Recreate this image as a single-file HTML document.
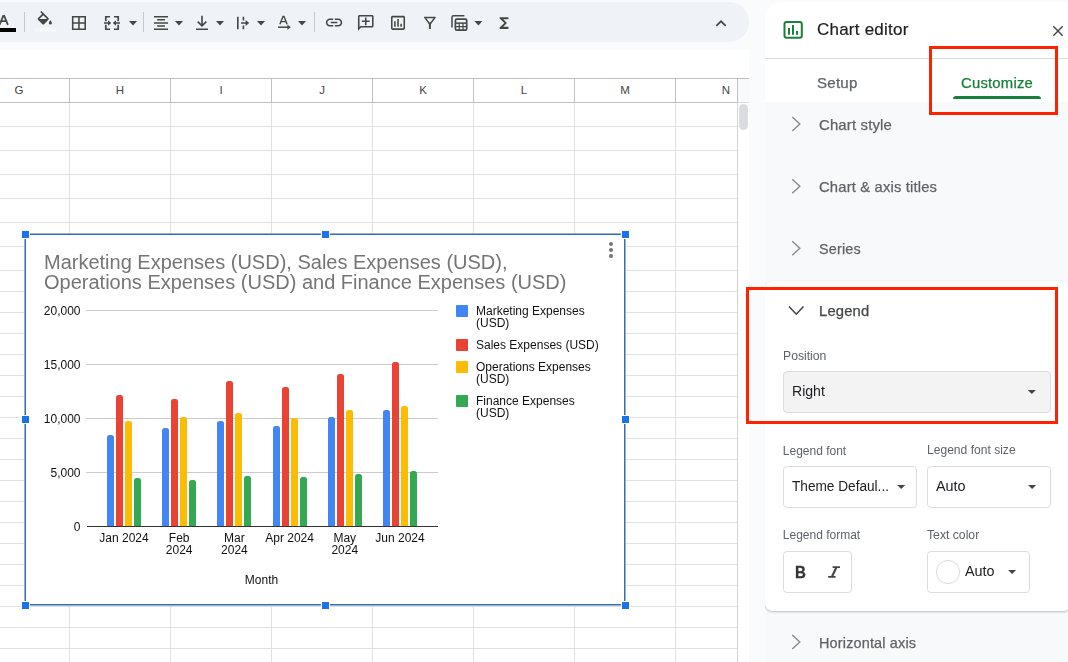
<!DOCTYPE html>
<html>
<head>
<meta charset="utf-8">
<title>Sheets</title>
<style>
*{box-sizing:border-box;margin:0;padding:0}
html,body{width:1068px;height:662px;overflow:hidden;background:#f9fbfd;font-family:"Liberation Sans",sans-serif;}
.a{position:absolute}
.colh{position:absolute;top:79px;height:23px;font-size:11.5px;color:#444746;text-align:center;line-height:23px}
.vl{position:absolute;width:1px;background:#e1e1e1}
.hl{position:absolute;height:1px;background:#e1e1e1;left:0;width:737px}
.tsep{position:absolute;top:12px;width:1px;height:20px;background:#c7c7c7}
.ico{position:absolute;fill:#444746;overflow:visible}
.ics{position:absolute;overflow:visible}
.dd{position:absolute;width:0;height:0;border-left:4px solid transparent;border-right:4px solid transparent;border-top:4px solid #444746}
.hd{position:absolute;width:9px;height:9px;background:#1a73e8;border:1px solid #fff}
.ct{position:absolute;font-size:12px;color:#111;white-space:nowrap;line-height:12px}
.bar{position:absolute;width:7px;border-radius:2.5px 2.5px 0 0}
.gl{position:absolute;left:86px;width:352px;height:1px;background:#ccc}
.sec{position:absolute;left:819px;font-size:15px;color:#444746;white-space:nowrap;line-height:20px}
.lbl{position:absolute;font-size:12px;color:#5f6368;white-space:nowrap;line-height:14px}
.box{position:absolute;border:1px solid #dadce0;border-radius:4px;background:#fff}
.val{position:absolute;font-size:14px;color:#202124;white-space:nowrap;line-height:16px}
.redbox{position:absolute;border:3px solid #ff2200}
.chev{position:absolute;overflow:visible;fill:none;stroke:#747775;stroke-width:1.6}
</style>
</head>
<body>
<div class="a" style="left:-30px;top:2px;width:779px;height:40px;background:#eff3f8;border-radius:20px"></div>
<svg class="ics" style="left:-4px;top:12px" width="24" height="22" viewBox="-4 12 24 22" fill="none" stroke="#444746" stroke-width="1.75"><path d="M-0.5 24.9L3.2 15.9H4.2L7.9 24.9M0.9 21H6.5"/></svg>
<div class="a" style="left:0;top:28px;width:16px;height:4px;background:#000"></div>
<div class="tsep" style="left:24px"></div>
<svg class="ico" style="left:35px;top:11px" width="22" height="22"><g transform="translate(0.30,0.00) scale(0.794)"><path d="M16.56 8.94L7.62 0 6.21 1.41l2.38 2.38-5.15 5.15c-.59.59-.59 1.54 0 2.12l5.5 5.5c.29.29.68.44 1.06.44s.77-.15 1.06-.44l5.5-5.5c.59-.58.59-1.53 0-2.12zM5.21 10L10 5.21 14.79 10H5.21zM19 11.5s-2 2.17-2 3.5c0 1.1.9 2 2 2s2-.9 2-2c0-1.33-2-3.5-2-3.5z"/></g></svg>
<div class="a" style="left:35px;top:28px;width:21px;height:4px;background:rgba(255,255,255,.35)"></div>
<svg class="ico" style="left:69px;top:13px" width="21" height="21"><g transform="translate(0.55,0.55) scale(0.783)"><path d="M3 3v18h18V3H3zm8 16H5v-6h6v6zm0-8H5V5h6v6zm8 8h-6v-6h6v6zm0-8h-6V5h6v6z"/></g></svg>
<svg class="ics" style="left:100px;top:12px" width="24" height="22" viewBox="100 12 24 22" fill="none" stroke="#444746" stroke-width="1.7"><path d="M110 16.75H105.8V21.2M105.8 24.8V29.25H110M114 16.75H118.2V21.2M118.2 24.8V29.25H114M104 23H109.5M120 23H114.5"/><path d="M108 20.2L111.2 23L108 25.8zM116 20.2L112.8 23L116 25.8z" fill="#444746" stroke="none"/></svg>
<svg class="ico" style="left:129px;top:21px" width="10" height="6"><path transform="translate(0.00,0)" d="M0 0h8L4 4.4z"/></svg>
<div class="tsep" style="left:143px"></div>
<svg class="ico" style="left:151px;top:13px" width="21" height="21"><g transform="translate(0.66,0.56) scale(0.78)"><path d="M7 15v2h10v-2H7zm-4 6h18v-2H3v2zm0-8h18v-2H3v2zm4-6v2h10V7H7zM3 3v2h18V3H3z"/></g></svg>
<svg class="ico" style="left:175px;top:21px" width="10" height="6"><path transform="translate(0.00,0)" d="M0 0h8L4 4.4z"/></svg>
<svg class="ics" style="left:190px;top:12px" width="24" height="22" viewBox="190 12 24 22" fill="none" stroke="#444746" stroke-width="1.6"><path d="M202 15.8V26M197.7 21.6L202 25.9L206.3 21.6M196 29.2H208"/></svg>
<svg class="ico" style="left:216px;top:21px" width="10" height="6"><path transform="translate(0.00,0)" d="M0 0h8L4 4.4z"/></svg>
<svg class="ics" style="left:232px;top:12px" width="24" height="22" viewBox="232 12 24 22" fill="none" stroke="#444746" stroke-width="1.6"><path d="M237.8 16.8V29.2M243.4 16.8V20.6M243.4 25.4V29.2M241 23H246.5"/><path d="M245.6 19.9L249.2 23L245.6 26.1z" fill="#444746" stroke="none"/></svg>
<svg class="ico" style="left:257px;top:21px" width="10" height="6"><path transform="translate(0.00,0)" d="M0 0h8L4 4.4z"/></svg>
<svg class="ics" style="left:274px;top:12px" width="24" height="22" viewBox="274 12 24 22" fill="none" stroke="#444746" stroke-width="1.4"><path d="M279.9 24.3L283 16.5H284L287.1 24.3M281 21.6H286"/></svg>
<svg class="ics" style="left:274px;top:12px" width="24" height="22" viewBox="274 12 24 22" fill="none" stroke="#444746" stroke-width="1.5"><path d="M278 27.2H288.5"/><path d="M287.4 24.6L290.8 27.2L287.4 29.8z" fill="#444746" stroke="none"/></svg>
<svg class="ico" style="left:298px;top:21px" width="10" height="6"><path transform="translate(0.00,0)" d="M0 0h8L4 4.4z"/></svg>
<div class="tsep" style="left:314px"></div>
<svg class="ico" style="left:324px;top:12px" width="22" height="22"><g transform="translate(0.20,0.66) scale(0.82)"><path d="M3.9 12c0-1.71 1.39-3.1 3.1-3.1h4V7H7c-2.76 0-5 2.24-5 5s2.24 5 5 5h4v-1.9H7c-1.71 0-3.1-1.39-3.1-3.1zM8 13h8v-2H8v2zm9-6h-4v1.9h4c1.71 0 3.1 1.39 3.1 3.1s-1.39 3.1-3.1 3.1h-4V17h4c2.76 0 5-2.24 5-5s-2.24-5-5-5z"/></g></svg>
<svg class="ico" style="left:356px;top:13px" width="21" height="21"><g transform="translate(0.40,0.50) scale(0.78)"><path transform="translate(24,0) scale(-1,1)" d="M22 4c0-1.1-.9-2-2-2H4c-1.1 0-2 .9-2 2v12c0 1.1.9 2 2 2h14l4 4V4zm-2 13.17L18.83 16H4V4h16v13.17zM13 5h-2v4H7v2h4v4h2v-4h4V9h-4z"/></g></svg>
<svg class="ico" style="left:388px;top:13px" width="21" height="21"><g transform="translate(0.66,0.50) scale(0.78)"><path d="M9 17H7v-7h2v7zm4 0h-2V7h2v10zm4 0h-2v-4h2v4zm2 2H5V5h14v14zm0-16H5c-1.1 0-2 .9-2 2v14c0 1.1.9 2 2 2h14c1.1 0 2-.9 2-2V5c0-1.1-.9-2-2-2z"/></g></svg>
<svg class="ics" style="left:420px;top:12px" width="24" height="22" viewBox="420 12 24 22" fill="none" stroke="#444746" stroke-width="1.5" stroke-linejoin="round"><path d="M424.7 17.4H435.1L429.9 24.2Z"/><path d="M429.9 22.6V28.9" stroke-width="2"/></svg>
<svg class="ics" style="left:448px;top:12px" width="24" height="22" viewBox="448 12 24 22" fill="none" stroke="#444746" stroke-width="1.5"><path d="M464.4 15.75H453.5Q452 15.75 452 17.2V27.4"/><rect x="455.4" y="19.2" width="11.3" height="10.9" rx="1.4" stroke-width="1.7"/><path d="M455.4 23.1H466.7" stroke-width="1.5"/><path d="M455.4 26.6H466.7M459.2 23V30M463 23V30" stroke-width="1.2"/></svg>
<svg class="ico" style="left:474px;top:21px" width="10" height="6"><path transform="translate(0.40,0)" d="M0 0h8L4 4.4z"/></svg>
<svg class="ico" style="left:495px;top:14px" width="20" height="20"><g transform="translate(0.20,0.20) scale(0.735)"><path d="M18 4H6v2l6.5 6L6 18v2h12v-3h-7l5-5-5-5h7V4z"/></g></svg>
<svg class="ico" style="left:710px;top:12px" width="24" height="24"><g transform="translate(0.45,0.85) scale(0.88)"><path d="M12 8l-6 6 1.41 1.41L12 10.83l4.59 4.58L18 14z"/></g></svg>
<div class="a" style="left:0;top:50px;width:749px;height:612px;background:#fff"></div>
<div class="a" style="left:0;top:78px;width:749px;height:1px;background:#c0c0c0"></div>
<div class="a" style="left:0;top:102px;width:749px;height:1px;background:#c0c0c0"></div>
<div class="vl" style="left:69px;top:79px;height:23px;background:#c0c0c0"></div>
<div class="vl" style="left:69px;top:103px;height:559px"></div>
<div class="vl" style="left:170px;top:79px;height:23px;background:#c0c0c0"></div>
<div class="vl" style="left:170px;top:103px;height:559px"></div>
<div class="vl" style="left:271px;top:79px;height:23px;background:#c0c0c0"></div>
<div class="vl" style="left:271px;top:103px;height:559px"></div>
<div class="vl" style="left:372px;top:79px;height:23px;background:#c0c0c0"></div>
<div class="vl" style="left:372px;top:103px;height:559px"></div>
<div class="vl" style="left:473px;top:79px;height:23px;background:#c0c0c0"></div>
<div class="vl" style="left:473px;top:103px;height:559px"></div>
<div class="vl" style="left:574px;top:79px;height:23px;background:#c0c0c0"></div>
<div class="vl" style="left:574px;top:103px;height:559px"></div>
<div class="vl" style="left:675px;top:79px;height:23px;background:#c0c0c0"></div>
<div class="vl" style="left:675px;top:103px;height:559px"></div>
<div class="vl" style="left:737px;top:79px;height:23px;background:#c0c0c0"></div>
<div class="vl" style="left:737px;top:103px;height:559px;background:#d4d4d4"></div>
<div class="colh" style="left:-31px;width:100px">G</div>
<div class="colh" style="left:70px;width:100px">H</div>
<div class="colh" style="left:171px;width:100px">I</div>
<div class="colh" style="left:272px;width:100px">J</div>
<div class="colh" style="left:373px;width:100px">K</div>
<div class="colh" style="left:474px;width:100px">L</div>
<div class="colh" style="left:575px;width:100px">M</div>
<div class="colh" style="left:676px;width:100px">N</div>
<div class="hl" style="top:126px"></div>
<div class="hl" style="top:150px"></div>
<div class="hl" style="top:174px"></div>
<div class="hl" style="top:198px"></div>
<div class="hl" style="top:222px"></div>
<div class="hl" style="top:246px"></div>
<div class="hl" style="top:270px"></div>
<div class="hl" style="top:291px"></div>
<div class="hl" style="top:312px"></div>
<div class="hl" style="top:333px"></div>
<div class="hl" style="top:354px"></div>
<div class="hl" style="top:375px"></div>
<div class="hl" style="top:396px"></div>
<div class="hl" style="top:417px"></div>
<div class="hl" style="top:438px"></div>
<div class="hl" style="top:459px"></div>
<div class="hl" style="top:480px"></div>
<div class="hl" style="top:501px"></div>
<div class="hl" style="top:522px"></div>
<div class="hl" style="top:543px"></div>
<div class="hl" style="top:564px"></div>
<div class="hl" style="top:585px"></div>
<div class="hl" style="top:606px"></div>
<div class="hl" style="top:627px"></div>
<div class="hl" style="top:648px"></div>
<div class="a" style="left:738px;top:79px;width:11px;height:23px;background:#f8f9fa"></div>
<div class="a" style="left:738px;top:102px;width:11px;height:1px;background:#dcdcdc"></div>
<div class="a" style="left:739px;top:104px;width:9px;height:26px;border-radius:4.5px;background:#dadce0"></div>
<div class="a" style="left:24px;top:233px;width:602px;height:373px;background:#fff;border:1px solid #b3aca3"></div>
<div class="a" style="left:25px;top:234px;width:600px;height:371px;border:1px solid #1a73e8"></div>
<div class="a" style="left:0;top:0;width:700px;height:640px;will-change:transform">
<div class="a" style="left:44px;top:252px;font-size:20px;line-height:20px;color:#757575;white-space:nowrap">Marketing Expenses (USD), Sales Expenses (USD),<br>Operations Expenses (USD) and Finance Expenses (USD)</div>
<div class="gl" style="top:310px"></div>
<div class="gl" style="top:364px"></div>
<div class="gl" style="top:418px"></div>
<div class="gl" style="top:472px"></div>
<div class="ct" style="left:20px;width:60.5px;text-align:right;top:305px">20,000</div>
<div class="ct" style="left:20px;width:60.5px;text-align:right;top:359px">15,000</div>
<div class="ct" style="left:20px;width:60.5px;text-align:right;top:413px">10,000</div>
<div class="ct" style="left:20px;width:60.5px;text-align:right;top:467px">5,000</div>
<div class="ct" style="left:20px;width:60.5px;text-align:right;top:521px">0</div>
<div class="bar" style="left:107px;top:435px;height:91px;background:#4285f4"></div>
<div class="bar" style="left:116px;top:395px;height:131px;background:#ea4335"></div>
<div class="bar" style="left:125px;top:421px;height:105px;background:#fbbc04"></div>
<div class="bar" style="left:134px;top:478px;height:48px;background:#34a853"></div>
<div class="bar" style="left:162px;top:428px;height:98px;background:#4285f4"></div>
<div class="bar" style="left:171px;top:399px;height:127px;background:#ea4335"></div>
<div class="bar" style="left:180px;top:417px;height:109px;background:#fbbc04"></div>
<div class="bar" style="left:189px;top:480px;height:46px;background:#34a853"></div>
<div class="bar" style="left:217px;top:421px;height:105px;background:#4285f4"></div>
<div class="bar" style="left:226px;top:381px;height:145px;background:#ea4335"></div>
<div class="bar" style="left:235px;top:413px;height:113px;background:#fbbc04"></div>
<div class="bar" style="left:244px;top:476px;height:50px;background:#34a853"></div>
<div class="bar" style="left:273px;top:426px;height:100px;background:#4285f4"></div>
<div class="bar" style="left:282px;top:387px;height:139px;background:#ea4335"></div>
<div class="bar" style="left:291px;top:418px;height:108px;background:#fbbc04"></div>
<div class="bar" style="left:300px;top:477px;height:49px;background:#34a853"></div>
<div class="bar" style="left:328px;top:417px;height:109px;background:#4285f4"></div>
<div class="bar" style="left:337px;top:374px;height:152px;background:#ea4335"></div>
<div class="bar" style="left:346px;top:410px;height:116px;background:#fbbc04"></div>
<div class="bar" style="left:355px;top:474px;height:52px;background:#34a853"></div>
<div class="bar" style="left:383px;top:410px;height:116px;background:#4285f4"></div>
<div class="bar" style="left:392px;top:362px;height:164px;background:#ea4335"></div>
<div class="bar" style="left:401px;top:406px;height:120px;background:#fbbc04"></div>
<div class="bar" style="left:410px;top:471px;height:55px;background:#34a853"></div>
<div class="a" style="left:87px;top:526px;width:351px;height:1px;background:#333"></div>
<div class="ct" style="left:84.0px;width:80px;text-align:center;top:532px">Jan 2024</div>
<div class="ct" style="left:139.2px;width:80px;text-align:center;top:532px">Feb<br>2024</div>
<div class="ct" style="left:194.4px;width:80px;text-align:center;top:532px">Mar<br>2024</div>
<div class="ct" style="left:249.6px;width:80px;text-align:center;top:532px">Apr 2024</div>
<div class="ct" style="left:304.8px;width:80px;text-align:center;top:532px">May<br>2024</div>
<div class="ct" style="left:360.0px;width:80px;text-align:center;top:532px">Jun 2024</div>
<div class="ct" style="left:221.5px;width:80px;text-align:center;top:574px">Month</div>
<div class="a" style="left:456px;top:305px;width:12px;height:12px;background:#4285f4;border-radius:1px"></div>
<div class="ct" style="left:476px;top:305px">Marketing Expenses<br>(USD)</div>
<div class="a" style="left:456px;top:339px;width:12px;height:12px;background:#ea4335;border-radius:1px"></div>
<div class="ct" style="left:476px;top:339px">Sales Expenses (USD)</div>
<div class="a" style="left:456px;top:361px;width:12px;height:12px;background:#fbbc04;border-radius:1px"></div>
<div class="ct" style="left:476px;top:361px">Operations Expenses<br>(USD)</div>
<div class="a" style="left:456px;top:395px;width:12px;height:12px;background:#34a853;border-radius:1px"></div>
<div class="ct" style="left:476px;top:395px">Finance Expenses<br>(USD)</div>
</div>
<div class="a" style="left:609px;top:242px;width:4px;height:4px;border-radius:2px;background:#757575"></div>
<div class="a" style="left:609px;top:248px;width:4px;height:4px;border-radius:2px;background:#757575"></div>
<div class="a" style="left:609px;top:254px;width:4px;height:4px;border-radius:2px;background:#757575"></div>
<div class="hd" style="left:21.0px;top:230.0px"></div>
<div class="hd" style="left:321.0px;top:230.0px"></div>
<div class="hd" style="left:621.0px;top:230.0px"></div>
<div class="hd" style="left:21.0px;top:415.0px"></div>
<div class="hd" style="left:621.0px;top:415.0px"></div>
<div class="hd" style="left:21.0px;top:601.0px"></div>
<div class="hd" style="left:321.0px;top:601.0px"></div>
<div class="hd" style="left:621.0px;top:601.0px"></div>
<div class="a" style="left:765px;top:2px;width:303px;height:660px;background:#f8f9fa;border-radius:16px 0 0 0"></div>
<div class="a" style="left:765px;top:2px;width:303px;height:100px;background:#fff;border-radius:16px 0 0 0"></div>
<div class="a" style="left:765px;top:58px;width:303px;height:1px;background:#dadce0"></div>
<div class="a" style="left:0;top:0;width:1068px;height:662px;will-change:transform">
<svg class="ics" style="left:783px;top:21px" width="20" height="18" viewBox="783 21 20 18" fill="none" stroke="#188038"><rect x="784.5" y="22" width="17.3" height="15.85" rx="2" stroke-width="2"/><path d="M789 28V34.8M793 25V34.8M797 31V34.8" stroke-width="2"/></svg>
<div class="a" style="left:817.3px;top:22.11px;font-size:15.7px;line-height:15.7px;color:#1f1f1f;letter-spacing:0.2px;font-weight:normal;white-space:nowrap;transform:scaleX(1.0849);transform-origin:0 0;-webkit-text-stroke:0.2px #1f1f1f">Chart editor</div>
<svg class="ics" style="left:1053px;top:26px" width="10" height="10" viewBox="0 0 10 10" fill="none" stroke="#444746" stroke-width="1.4"><path d="M0.3 0.3L9.7 9.7M9.7 0.3L0.3 9.7"/></svg>
<div class="a" style="left:817.0px;top:76.10px;font-size:14.3px;line-height:14.3px;color:#5f6368;letter-spacing:0.2px;font-weight:normal;white-space:nowrap;transform:scaleX(1.0555);transform-origin:0 0;-webkit-text-stroke:0.25px #5f6368">Setup</div>
<div class="a" style="left:961.4px;top:76.10px;font-size:14.3px;line-height:14.3px;color:#188038;letter-spacing:0.2px;font-weight:normal;white-space:nowrap;transform:scaleX(1.0382);transform-origin:0 0;-webkit-text-stroke:0.25px #188038">Customize</div>
<div class="a" style="left:953px;top:96px;width:88px;height:3px;background:#188038;border-radius:3px 3px 0 0"></div>
<svg class="ics" style="left:788px;top:112px" width="16" height="24" viewBox="788 112 16 24" fill="none" stroke="#8a8e92" stroke-width="1.5"><path d="M792.25 117.00L799.8 124.00L792.25 131.00"/></svg>
<div class="a" style="left:819.0px;top:118.20px;font-size:14.3px;line-height:14.3px;color:#5f6368;letter-spacing:0.15px;font-weight:normal;white-space:nowrap;transform:scaleX(1.0429);transform-origin:0 0;-webkit-text-stroke:0.25px #5f6368">Chart style</div>
<svg class="ics" style="left:788px;top:174px" width="16" height="24" viewBox="788 174 16 24" fill="none" stroke="#8a8e92" stroke-width="1.5"><path d="M792.25 179.30L799.8 186.30L792.25 193.30"/></svg>
<div class="a" style="left:819.0px;top:180.20px;font-size:14.3px;line-height:14.3px;color:#5f6368;letter-spacing:0.15px;font-weight:normal;white-space:nowrap;transform:scaleX(1.0358);transform-origin:0 0;-webkit-text-stroke:0.25px #5f6368">Chart &amp; axis titles</div>
<svg class="ics" style="left:788px;top:236px" width="16" height="24" viewBox="788 236 16 24" fill="none" stroke="#8a8e92" stroke-width="1.5"><path d="M792.25 241.30L799.8 248.30L792.25 255.30"/></svg>
<div class="a" style="left:819.0px;top:242.20px;font-size:14.3px;line-height:14.3px;color:#5f6368;letter-spacing:0.15px;font-weight:normal;white-space:nowrap;transform:scaleX(1.0088);transform-origin:0 0;-webkit-text-stroke:0.25px #5f6368">Series</div>
<svg class="ics" style="left:788px;top:630px" width="16" height="24" viewBox="788 630 16 24" fill="none" stroke="#8a8e92" stroke-width="1.5"><path d="M792.25 635.00L799.8 642.00L792.25 649.00"/></svg>
<div class="a" style="left:819.0px;top:635.60px;font-size:14.3px;line-height:14.3px;color:#5f6368;letter-spacing:0.15px;font-weight:normal;white-space:nowrap;transform:scaleX(1.0121);transform-origin:0 0;-webkit-text-stroke:0.25px #5f6368">Horizontal axis</div>
<div class="a" style="left:765px;top:281px;width:306px;height:330px;background:#fff;border-radius:8px;box-shadow:0 1px 2px rgba(60,64,67,.22),0 1px 3px rgba(60,64,67,.10);clip-path:inset(-6px -6px -6px 0)"></div>
<svg class="ics" style="left:786px;top:302px" width="20" height="16" viewBox="786 302 20 16" fill="none" stroke="#444746" stroke-width="1.6"><path d="M789 306.5L796.25 314.2L803.5 306.5"/></svg>
<div class="a" style="left:818.7px;top:304.30px;font-size:14.3px;line-height:14.3px;color:#444746;letter-spacing:0.15px;font-weight:normal;white-space:nowrap;transform:scaleX(1.0366);transform-origin:0 0;-webkit-text-stroke:0.25px #444746">Legend</div>
<div class="a" style="left:782.5px;top:349.84px;font-size:12px;line-height:12px;color:#5f6368;letter-spacing:0px;font-weight:normal;white-space:nowrap;transform:scaleX(1.0166);transform-origin:0 0;">Position</div>
<div class="box" style="left:783px;top:371px;width:268px;height:42px;background:#f3f3f3"></div>
<div class="a" style="left:791.6px;top:385.42px;font-size:13.8px;line-height:13.8px;color:#202124;letter-spacing:0px;font-weight:normal;white-space:nowrap;transform:scaleX(1.0181);transform-origin:0 0;">Right</div>
<svg class="ico" style="left:1028px;top:389px" width="10" height="6"><path transform="translate(0.00,0.90)" d="M-0.25 0h8.1l-4.05 4.05z"/></svg>
<div class="a" style="left:782.8px;top:444.54px;font-size:12px;line-height:12px;color:#5f6368;letter-spacing:0px;font-weight:normal;white-space:nowrap;">Legend font</div>
<div class="box" style="left:783px;top:466px;width:134px;height:42px"></div>
<div class="a" style="left:791.9px;top:480.32px;font-size:13.8px;line-height:13.8px;color:#202124;letter-spacing:0px;font-weight:normal;white-space:nowrap;transform:scaleX(0.9880);transform-origin:0 0;">Theme Defaul...</div>
<svg class="ico" style="left:897px;top:484px" width="10" height="6"><path transform="translate(0.40,0.90)" d="M-0.25 0h8.1l-4.05 4.05z"/></svg>
<div class="a" style="left:926.5px;top:443.54px;font-size:12px;line-height:12px;color:#5f6368;letter-spacing:0px;font-weight:normal;white-space:nowrap;transform:scaleX(1.0060);transform-origin:0 0;">Legend font size</div>
<div class="box" style="left:927px;top:466px;width:124px;height:42px"></div>
<div class="a" style="left:936.3px;top:480.32px;font-size:13.8px;line-height:13.8px;color:#202124;letter-spacing:0px;font-weight:normal;white-space:nowrap;transform:scaleX(1.0427);transform-origin:0 0;">Auto</div>
<svg class="ico" style="left:1028px;top:484px" width="10" height="6"><path transform="translate(0.30,0.90)" d="M-0.25 0h8.1l-4.05 4.05z"/></svg>
<div class="a" style="left:782.8px;top:528.54px;font-size:12px;line-height:12px;color:#5f6368;letter-spacing:0px;font-weight:normal;white-space:nowrap;">Legend format</div>
<div class="box" style="left:783px;top:551px;width:69px;height:42px"></div>
<div class="a" style="left:795.3px;top:564.32px;font-size:16.4px;line-height:16.4px;color:#333536;letter-spacing:0px;font-weight:bold;white-space:nowrap;transform:scaleX(0.9203);transform-origin:0 0;-webkit-text-stroke:0.3px #333536">B</div>
<svg class="ics" style="left:827px;top:565px" width="14" height="14" viewBox="827 565 14 14" fill="none" stroke="#444746" stroke-width="1.7"><path d="M832.6 567.2H840M828.2 576.8H835.6"/><path d="M836.6 567L831.8 577" stroke-width="2.1"/></svg>
<div class="a" style="left:927.3px;top:528.54px;font-size:12px;line-height:12px;color:#5f6368;letter-spacing:0px;font-weight:normal;white-space:nowrap;transform:scaleX(1.0165);transform-origin:0 0;">Text color</div>
<div class="box" style="left:927px;top:551px;width:103px;height:42px"></div>
<div class="a" style="left:936px;top:560px;width:24px;height:24px;border-radius:12px;border:1px solid #dadce0;background:#fff"></div>
<div class="a" style="left:964.9px;top:565.22px;font-size:13.8px;line-height:13.8px;color:#202124;letter-spacing:0px;font-weight:normal;white-space:nowrap;transform:scaleX(1.0427);transform-origin:0 0;">Auto</div>
<svg class="ico" style="left:1008px;top:569px" width="10" height="6"><path transform="translate(0.30,0.90)" d="M-0.25 0h8.1l-4.05 4.05z"/></svg>
</div>
<div class="redbox" style="left:929px;top:46px;width:129px;height:69px"></div>
<div class="redbox" style="left:746px;top:287px;width:312px;height:137px"></div>
</body>
</html>
